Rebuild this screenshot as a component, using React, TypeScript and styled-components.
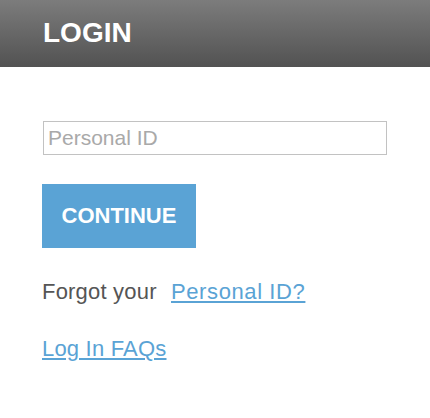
import React from "react";
import styled, { createGlobalStyle } from "styled-components";

const GlobalStyle = createGlobalStyle`
  body {
    margin: 0;
    background: #ffffff;
    font-family: "Liberation Sans", Arial, sans-serif;
  }
`;

const App: React.FC = () => {
  return (
    <>
      <GlobalStyle />
      <Page>
        <Header>
          <Title>LOGIN</Title>
        </Header>
        <Content>
          <Input type="text" placeholder="Personal ID" />
          <Button type="button">CONTINUE</Button>
          <HelpLine>
            Forgot your <Link href="#" $inline>Personal ID?</Link>
          </HelpLine>
          <HelpLine>
            <Link href="#">Log In FAQs</Link>
          </HelpLine>
        </Content>
      </Page>
    </>
  );
};

export default App;

const Page = styled.div`
  width: 430px;
  min-height: 418px;
  background: #ffffff;
`;

const Header = styled.div`
  height: 67px;
  display: flex;
  align-items: center;
  padding-left: 43px;
  box-sizing: border-box;
  background: linear-gradient(to bottom, #7c7c7c 0%, #525252 100%);
`;

const Title = styled.h1`
  margin: 0;
  color: #ffffff;
  font-size: 28px;
  font-weight: bold;
  line-height: 1;
  margin-top: -2px;
`;

const Content = styled.div`
  display: flex;
  flex-direction: column;
  align-items: flex-start;
  padding: 54px 0 0 42px;
`;

const Input = styled.input`
  width: 344px;
  height: 34px;
  box-sizing: border-box;
  margin-left: 1px;
  padding: 0 4px;
  border: 1px solid #c2c2c2;
  border-radius: 0;
  font-family: "Liberation Sans", Arial, sans-serif;
  font-size: 21px;
  color: #333;
  outline: none;

  &::placeholder {
    color: #a9a9a9;
  }
`;

const Button = styled.button`
  margin-top: 29px;
  width: 154px;
  height: 64px;
  border: none;
  background: #5aa3d5;
  color: #ffffff;
  font-family: "Liberation Sans", Arial, sans-serif;
  font-size: 22px;
  font-weight: bold;
  cursor: pointer;
`;

const HelpLine = styled.p`
  margin: 31px 0 0 0;
  font-size: 22px;
  line-height: 25px;
  color: #555555;
  letter-spacing: 0.2px;

  & + & {
    margin-top: 32px;
  }
`;

const Link = styled.a<{ $inline?: boolean }>`
  color: #5aa3d5;
  text-decoration: underline;
  margin-left: ${({ $inline }) => ($inline ? "8px" : "0")};
  letter-spacing: ${({ $inline }) => ($inline ? "0.6px" : "0.2px")};
`;
